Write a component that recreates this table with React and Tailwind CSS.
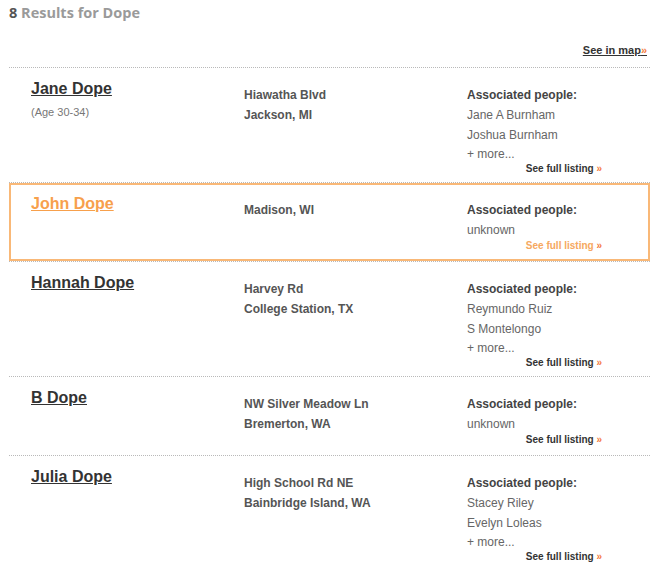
const results = [
  { name: 'Jane Dope', age: '(Age 30-34)', address: ['Hiawatha Blvd', 'Jackson, MI'], people: ['Jane A Burnham', 'Joshua Burnham'], more: true },
  { name: 'John Dope', address: ['Madison, WI'], people: ['unknown'], active: true },
  { name: 'Hannah Dope', address: ['Harvey Rd', 'College Station, TX'], people: ['Reymundo Ruiz', 'S Montelongo'], more: true },
  { name: 'B Dope', address: ['NW Silver Meadow Ln', 'Bremerton, WA'], people: ['unknown'] },
  { name: 'Julia Dope', address: ['High School Rd NE', 'Bainbridge Island, WA'], people: ['Stacey Riley', 'Evelyn Loleas'], more: true },
]

function ResultRow({ r }) {
  return (
    <div className="border-t border-dotted border-[#b9b9b9]">
      <div className={r.active ? 'border-2 border-[#f9b877]' : 'my-[1px] border border-transparent'}>
        <div className={`grid grid-cols-[213px_223px_135px] pt-[10px] ${r.more ? 'pb-[5px]' : 'pb-[7px]'} ${r.active ? 'pl-[20px]' : 'pl-[21px]'}`}>
          <div>
            <a href="#" className={`block text-[16px] leading-[18px] font-bold underline ${r.active ? 'text-[#f7a04c]' : 'text-[#333]'}`}>
              {r.name}
            </a>
            {r.age && <div className="mt-[6px] text-[11px] leading-4 text-[#777]">{r.age}</div>}
          </div>
          <div className="mt-[5px] text-[12px] leading-5 font-bold text-[#555]">
            {r.address.map(line => <div key={line}>{line}</div>)}
          </div>
          <div className="mt-[5px] text-[12px] leading-5">
            <div className="font-bold text-[#444]">Associated people:</div>
            {r.people.map(p => <div key={p} className="text-[#666]">{p}</div>)}
            {r.more && <div className="leading-[18px] text-[#666]">+ more...</div>}
            <div className={`text-right text-[10px] leading-[12px] font-bold ${r.active ? 'text-[#f6a860]' : 'text-[#333]'}`}>
              See full listing <span className="text-[#f47b3c]">»</span>
            </div>
          </div>
        </div>
      </div>
    </div>
  )
}

export default function App() {
  return (
    <div className="w-[650px] h-[570px] overflow-hidden bg-white font-['Liberation_Sans',Arial,sans-serif]">
      <div className="ml-[9px] w-[641px]">
        <div className="pt-[3px] mb-[9px]">
          <h1 className="text-[14.5px] leading-5 font-bold text-[#9a9a9a] font-['Open_Sans',sans-serif]">
            <span className="text-[#555]">8</span> Results for Dope
          </h1>
          <div className="mt-[19px] pr-[3px] text-right text-[11px] leading-4 font-bold">
            <a href="#" className="text-[#333] underline">See in map<span className="text-[#f47b3c]">»</span></a>
          </div>
        </div>
        {results.map(r => <ResultRow key={r.name} r={r} />)}
      </div>
    </div>
  )
}
